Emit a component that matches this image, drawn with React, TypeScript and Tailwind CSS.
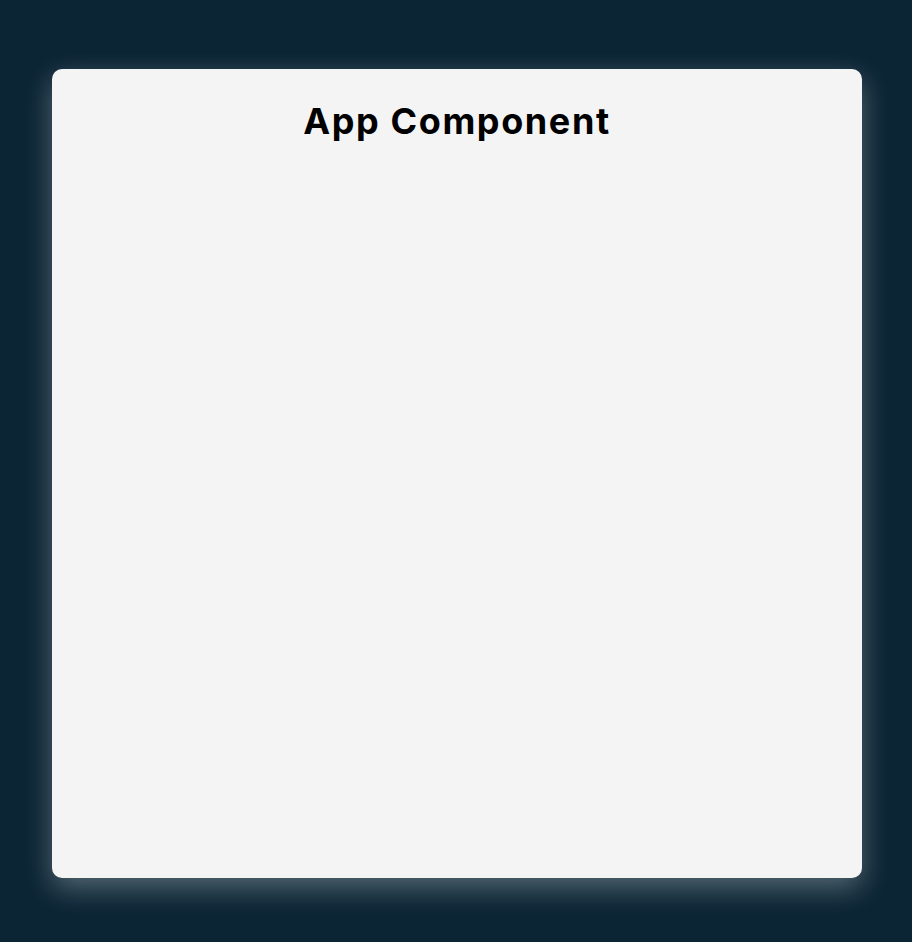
export default function App() {
  return (
    <div className="min-h-screen bg-[#0c2535] pt-[69px] pb-[64px] pl-[52px]">
      <div className="w-[810px] h-[809px] rounded-[10px] bg-[#f4f4f4] shadow-[0_10px_28px_rgba(255,255,255,0.3)]">
        <h1 className="pt-[25px] text-center text-[36px] font-bold tracking-[1.6px] text-black [font-family:'Inter','Open_Sans',sans-serif]">
          App Component
        </h1>
      </div>
    </div>
  );
}
